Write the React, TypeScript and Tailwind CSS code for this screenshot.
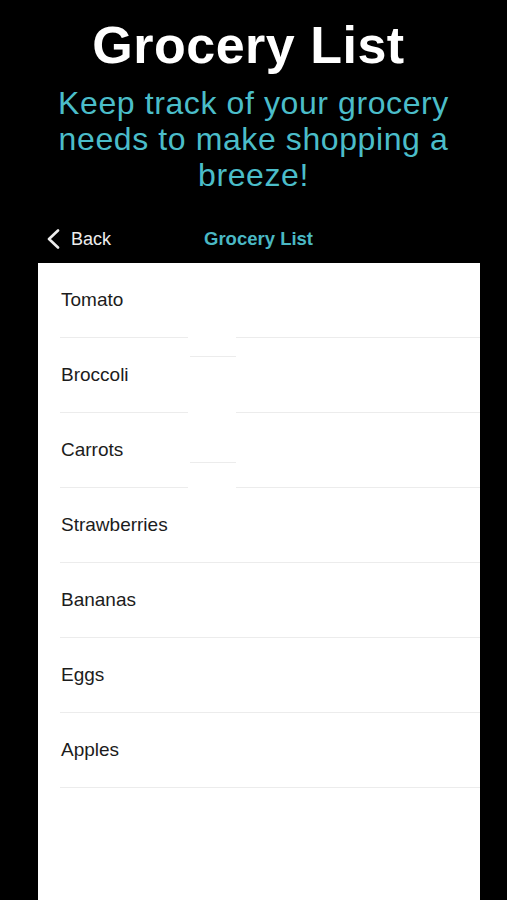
import React from "react";

const items = ["Tomato", "Broccoli", "Carrots", "Strawberries", "Bananas", "Eggs", "Apples"];

// the first three separators show a small break in the reference
const brokenRows = [0, 1, 2];

function Row({ label, index }: { label: string; index: number }) {
  const broken = brokenRows.includes(index);
  return (
    <div className="relative ml-[22px] h-[75px] flex flex-col">
      <div className="flex-1 flex items-center pl-[1px] text-[19px] text-[#1c1c1c]">{label}</div>
      {broken ? (
        <div className="flex h-[1px]">
          <div className="w-[128px] bg-[#ececec]" />
          <div className="w-[48px]" />
          <div className="flex-1 bg-[#ececec]" />
        </div>
      ) : (
        <div className="h-[1px] bg-[#ececec]" />
      )}
      {index === 0 && <div className="absolute left-[130px] top-[93px] w-[46px] h-[1px] bg-[#ececec]" />}
      {index === 2 && <div className="absolute left-[130px] top-[49px] w-[46px] h-[1px] bg-[#ececec]" />}
    </div>
  );
}

export default function App() {
  return (
    <div className="h-[900px] overflow-hidden bg-black flex flex-col font-['Liberation_Sans',Arial,sans-serif]">
      {/* Header */}
      <h1 className="pt-[15px] pr-[10px] text-center text-[52px] leading-[60px] tracking-[0.5px] font-bold text-white">
        Grocery List
      </h1>
      <p className="mt-[10px] mx-auto max-w-[420px] text-center text-[32px] leading-[36px] tracking-[0.6px] text-[#4bbdc9]">
        Keep track of your grocery needs to make shopping a breeze!
      </p>

      {/* Nav bar */}
      <div className="mt-[24px] h-[44px] flex items-center">
        <svg width="14" height="20" viewBox="0 0 14 20" className="ml-[46px] shrink-0">
          <path d="M12 1.5 L3 10 L12 18.5" fill="none" stroke="#ededed" strokeWidth="2.6" strokeLinecap="round" strokeLinejoin="round" />
        </svg>
        <span className="ml-[11px] text-[18px] text-[#ededed]">Back</span>
        <span className="ml-[93px] text-[18.5px] font-bold text-[#4ab8c4]">Grocery List</span>
      </div>

      {/* List panel */}
      <div className="mt-[2px] ml-[38px] w-[442px] flex-1 bg-white">
        {items.map((item, i) => (
          <Row key={item} label={item} index={i} />
        ))}
      </div>
    </div>
  );
}
